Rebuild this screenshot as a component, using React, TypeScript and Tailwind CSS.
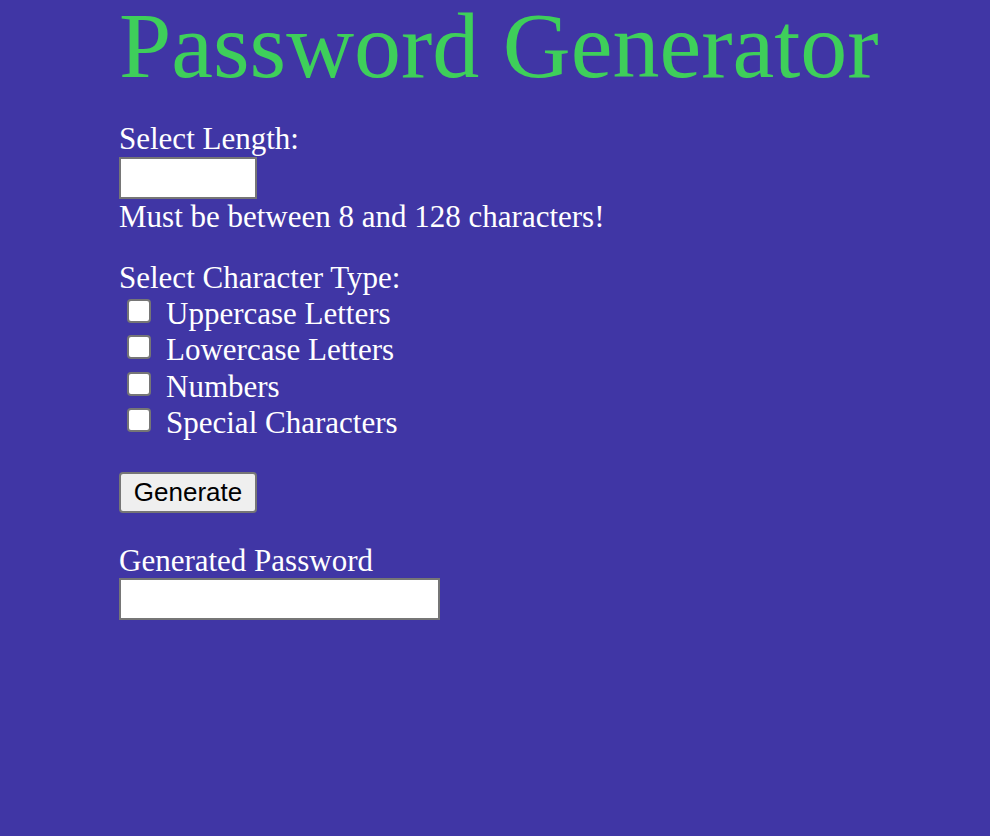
import React, { useState } from 'react';

const charTypes = [
  { key: 'upper', label: 'Uppercase Letters' },
  { key: 'lower', label: 'Lowercase Letters' },
  { key: 'numbers', label: 'Numbers' },
  { key: 'special', label: 'Special Characters' }
];

export default function App() {
  const [length, setLength] = useState('');
  const [checked, setChecked] = useState<Record<string, boolean>>({});
  const [password, setPassword] = useState('');

  const generate = () => {
    const n = parseInt(length, 10);
    if (!n || n < 8 || n > 128) return;
    let pool = '';
    if (checked.upper) pool += 'ABCDEFGHIJKLMNOPQRSTUVWXYZ';
    if (checked.lower) pool += 'abcdefghijklmnopqrstuvwxyz';
    if (checked.numbers) pool += '0123456789';
    if (checked.special) pool += '!@#$%^&*()-_=+[]{};:,.<>?';
    if (!pool) return;
    let out = '';
    for (let i = 0; i < n; i++) out += pool[Math.floor(Math.random() * pool.length)];
    setPassword(out);
  };

  return (
    <div className="min-h-[836px] bg-[#4036a5] text-white font-['Liberation_Serif','Times_New_Roman',serif] text-[31px] leading-[35.6px]">
      <div className="pl-[119px]">
        <h1 className="pt-[2px] text-[94px] leading-[86px] text-[#3ecf5a] font-normal">Password Generator</h1>

        <div className="mt-[33px]">
          <label htmlFor="length" className="block">Select Length:</label>
          <input
            id="length"
            type="text"
            value={length}
            onChange={(e) => setLength(e.target.value)}
            className="block w-[138px] h-[42px] bg-white border-2 border-[#767676] text-black px-2 text-[26px] outline-none"
          />
          <p>Must be between 8 and 128 characters!</p>
        </div>

        <div className="mt-[26px]">
          <p>Select Character Type:</p>
          {charTypes.map((t) => (
            <label key={t.key} className="flex items-start h-[36.5px] leading-[36.5px]">
              <input
                type="checkbox"
                checked={!!checked[t.key]}
                onChange={(e) => setChecked({ ...checked, [t.key]: e.target.checked })}
                className="appearance-none w-[24px] h-[24px] mt-[3px] ml-[8px] mr-[15px] bg-white border-2 border-[#767676] rounded-[4px] checked:bg-[#0075ff] checked:border-[#0075ff]"
              />
              <span>{t.label}</span>
            </label>
          ))}
        </div>

        <button
          type="button"
          onClick={generate}
          className="mt-[30px] w-[138px] h-[41px] bg-[#efefef] border-2 border-[#767676] rounded-[4px] text-black text-[26px] leading-none font-['Liberation_Sans',Arial,sans-serif]"
        >
          Generate
        </button>

        <div className="mt-[30px]">
          <label htmlFor="generated" className="block">Generated Password</label>
          <input
            id="generated"
            type="text"
            readOnly
            value={password}
            className="block w-[321px] h-[42px] bg-white border-2 border-[#767676] text-black px-2 text-[20px] outline-none"
          />
        </div>
      </div>
    </div>
  );
}
